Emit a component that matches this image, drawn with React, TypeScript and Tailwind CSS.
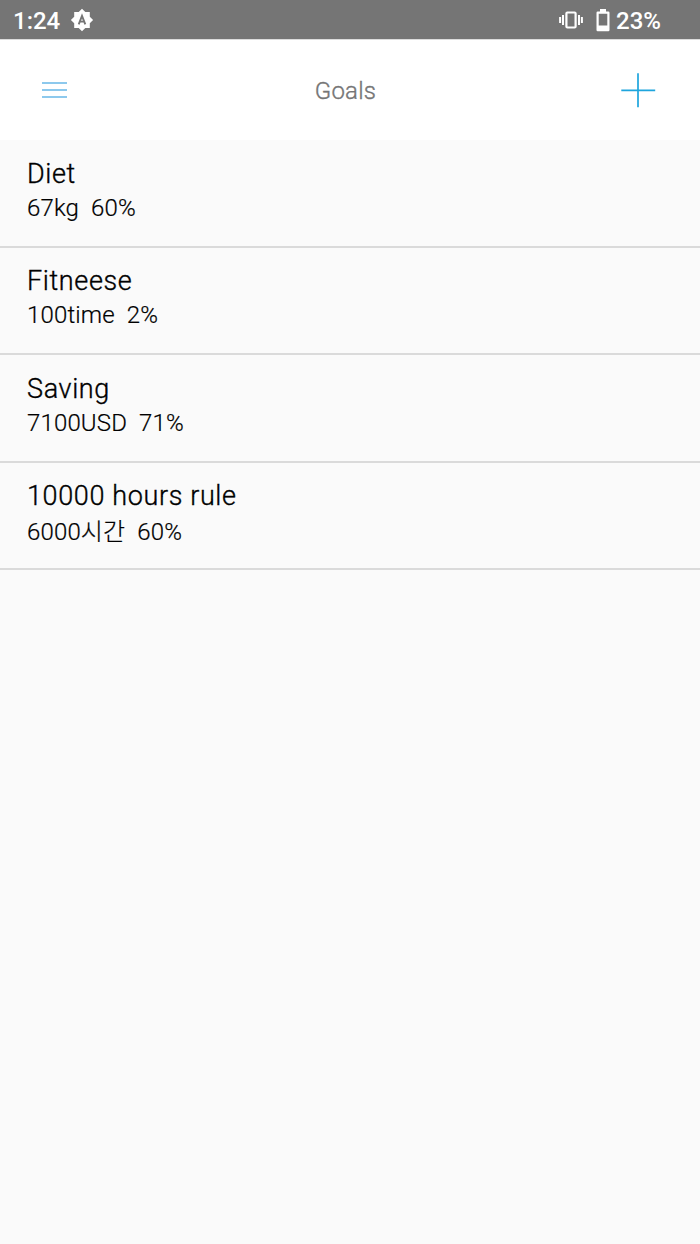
const goals = [
  { title: "Diet", amount: "67kg", percent: "60%" },
  { title: "Fitneese", amount: "100time", percent: "2%" },
  { title: "Saving", amount: "7100USD", percent: "71%" },
  { title: "10000 hours rule", amount: "6000시간", percent: "60%" },
];

function StatusBar() {
  return (
    <div className="flex h-[39px] items-center bg-[#757575] pl-[13px] pr-[39px] pt-[3px] text-[24px] font-medium leading-[28px] text-white">
      <span className="w-[57px]">1:24</span>
      <svg className="-mt-[3px]" width="24" height="24" viewBox="0 0 24 24">
        <path
          d="M12 .8 15.3 4.1H19.8V8.7L23.1 12 19.8 15.3V19.9H15.3L12 23.2 8.7 19.9H4.2V15.3L.9 12 4.2 8.7V4.1H8.7Z"
          fill="#fff"
        />
        <path d="M8.7 16.3 12 7.8 15.3 16.3M9.8 13.6H14.2" fill="none" stroke="#757575" strokeWidth="1.9" />
      </svg>
      <div className="ml-auto flex items-center">
        <svg className="-mt-[3px] mr-[13px]" width="24" height="20" viewBox="0 0 24 20">
          <path d="M1.1 7V13M4 5V15M20 5V15M22.9 7V13" stroke="#fff" strokeWidth="2" />
          <rect x="7.4" y="2.5" width="9.2" height="15" rx="1" fill="none" stroke="#fff" strokeWidth="2.2" />
        </svg>
        <svg className="-mt-[2px] mr-[6px]" width="14" height="23" viewBox="0 0 14 23">
          <path
            d="M4 0H10V2.5H12.3Q13.5 2.5 13.5 3.7V21Q13.5 22.2 12.3 22.2H1.7Q.5 22.2 .5 21V3.7Q.5 2.5 1.7 2.5H4ZM2.7 4.7V16.4H11.3V4.7Z"
            fill="#fff"
            fillRule="evenodd"
          />
        </svg>
        <span>23%</span>
      </div>
    </div>
  );
}

function Header() {
  return (
    <header className="flex h-[101px] items-center justify-between border-t border-[#dcdcdc] bg-white pl-[41px] pr-[44px]">
      <button aria-label="Menu" className="w-[36px]">
        <svg width="27" height="18" viewBox="0 0 27 18" fill="none" stroke="#68b8e8" strokeWidth="1.7">
          <path d="M1 2H26M1 9H26M1 16H26" />
        </svg>
      </button>
      <h1 className="mr-[6px] pt-[2px] text-[24px] font-light leading-[28px] tracking-[0.2px] text-[#757575] [-webkit-text-stroke:0.35px_#757575]">
        Goals
      </h1>
      <button aria-label="Add goal">
        <svg width="36" height="36" viewBox="0 0 36 36" fill="none" stroke="#1ea5dd" strokeWidth="1.7">
          <path d="M1.3 18.4H35.2M18 1.3V35.2" />
        </svg>
      </button>
    </header>
  );
}

export default function App() {
  return (
    <div className="min-h-[1244px] w-full bg-[#fafafa] font-['Roboto','Noto_Sans_CJK_KR',sans-serif]">
      <StatusBar />
      <Header />
      <ul>
        {goals.map((goal) => (
          <li
            key={goal.title}
            className="h-[107.5px] border-b-2 border-[#dadada] pl-[27px] pt-[15.5px] text-black last:[&>div:last-child]:pt-[2px]"
          >
            <div className="h-[35.4px] text-[27px] font-light leading-[36px] tracking-[0.63px] [-webkit-text-stroke:0.35px_#000]">
              {goal.title}
            </div>
            <div className="flex gap-[12px] text-[24px] font-light leading-[34px] tracking-[0.15px] [-webkit-text-stroke:0.2px_#000]">
              <span>{goal.amount}</span>
              <span>{goal.percent}</span>
            </div>
          </li>
        ))}
      </ul>
    </div>
  );
}
